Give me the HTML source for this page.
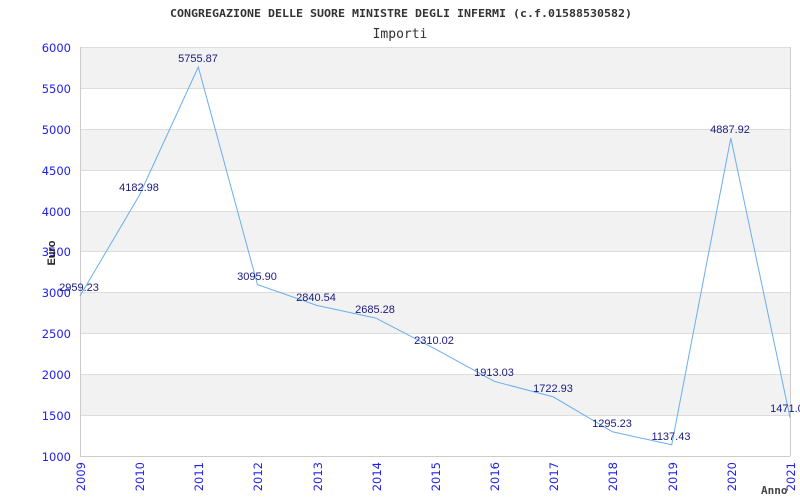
<!DOCTYPE html>
<html><head><meta charset="utf-8"><style>body{margin:0;background:#fff}svg{display:block}</style></head><body>
<svg width="800" height="500" xmlns="http://www.w3.org/2000/svg">
<text x="170" y="17" textLength="462" lengthAdjust="spacingAndGlyphs" font-family="DejaVu Sans Mono, monospace" font-weight="bold" font-size="11" fill="#333">CONGREGAZIONE DELLE SUORE MINISTRE DEGLI INFERMI (c.f.01588530582)</text>
<text x="400" y="38" text-anchor="middle" font-family="DejaVu Sans Mono, monospace" font-size="13" fill="#333">Importi</text>
<g fill="#f2f2f2">
<rect x="80" y="47" width="710" height="41"/><rect x="80" y="129" width="710" height="41"/><rect x="80" y="211" width="710" height="40"/><rect x="80" y="292" width="710" height="41"/><rect x="80" y="374" width="710" height="41"/>
</g>
<g stroke="#ddd" stroke-width="1">
<line x1="80" y1="88.5" x2="790" y2="88.5"/><line x1="80" y1="129.5" x2="790" y2="129.5"/><line x1="80" y1="170.5" x2="790" y2="170.5"/><line x1="80" y1="211.5" x2="790" y2="211.5"/><line x1="80" y1="251.5" x2="790" y2="251.5"/><line x1="80" y1="292.5" x2="790" y2="292.5"/><line x1="80" y1="333.5" x2="790" y2="333.5"/><line x1="80" y1="374.5" x2="790" y2="374.5"/><line x1="80" y1="415.5" x2="790" y2="415.5"/>
<line x1="80" y1="47.5" x2="790" y2="47.5"/>
</g>
<g stroke="#ccc" fill="none"><line x1="80.5" y1="47" x2="80.5" y2="456"/><line x1="80" y1="456.5" x2="790" y2="456.5"/><line x1="790.5" y1="47" x2="790.5" y2="456"/></g>
<g font-family="DejaVu Sans, sans-serif" font-size="11.5" fill="#2020ee" text-anchor="end">
<text x="71" y="52">6000</text><text x="71" y="93">5500</text><text x="71" y="134">5000</text><text x="71" y="175">4500</text><text x="71" y="216">4000</text><text x="71" y="256">3500</text><text x="71" y="297">3000</text><text x="71" y="338">2500</text><text x="71" y="379">2000</text><text x="71" y="420">1500</text><text x="71" y="461">1000</text>
</g>
<g font-family="DejaVu Sans, sans-serif" font-size="11.5" fill="#2020ee" text-anchor="end">
<text transform="translate(85,462) rotate(-90)">2009</text>
<text transform="translate(144,462) rotate(-90)">2010</text>
<text transform="translate(203,462) rotate(-90)">2011</text>
<text transform="translate(262,462) rotate(-90)">2012</text>
<text transform="translate(322,462) rotate(-90)">2013</text>
<text transform="translate(381,462) rotate(-90)">2014</text>
<text transform="translate(440,462) rotate(-90)">2015</text>
<text transform="translate(499,462) rotate(-90)">2016</text>
<text transform="translate(558,462) rotate(-90)">2017</text>
<text transform="translate(617,462) rotate(-90)">2018</text>
<text transform="translate(677,462) rotate(-90)">2019</text>
<text transform="translate(736,462) rotate(-90)">2020</text>
<text transform="translate(795,462) rotate(-90)">2021</text>
</g>
<text transform="translate(55,253) rotate(-90)" text-anchor="middle" font-family="Liberation Sans, sans-serif" font-weight="bold" font-size="11" fill="#222">Euro</text>
<text x="761" y="494" font-family="DejaVu Sans Mono, monospace" font-weight="bold" font-size="11" fill="#444">Anno</text>
<polyline fill="none" stroke="#6aaef0" stroke-width="1" points="80,296 139.2,195.6 198.3,67 257.5,284.6 316.7,305.4 375.8,318.1 435,348.8 494.2,381.3 553.3,396.9 612.5,431.8 671.7,444.8 730.8,138 790,417.5"/>
<g font-family="Liberation Sans, sans-serif" font-size="11" fill="#1a1a80" text-anchor="middle">
<text x="79" y="291">2959.23</text><text x="139" y="191">4182.98</text><text x="198" y="62">5755.87</text><text x="257" y="280">3095.90</text><text x="316" y="301">2840.54</text><text x="375" y="313">2685.28</text><text x="434" y="344">2310.02</text><text x="494" y="376">1913.03</text><text x="553" y="392">1722.93</text><text x="612" y="427">1295.23</text><text x="671" y="440">1137.43</text><text x="730" y="133">4887.92</text><text x="790" y="412">1471.00</text>
</g>
</svg>
</body></html>
